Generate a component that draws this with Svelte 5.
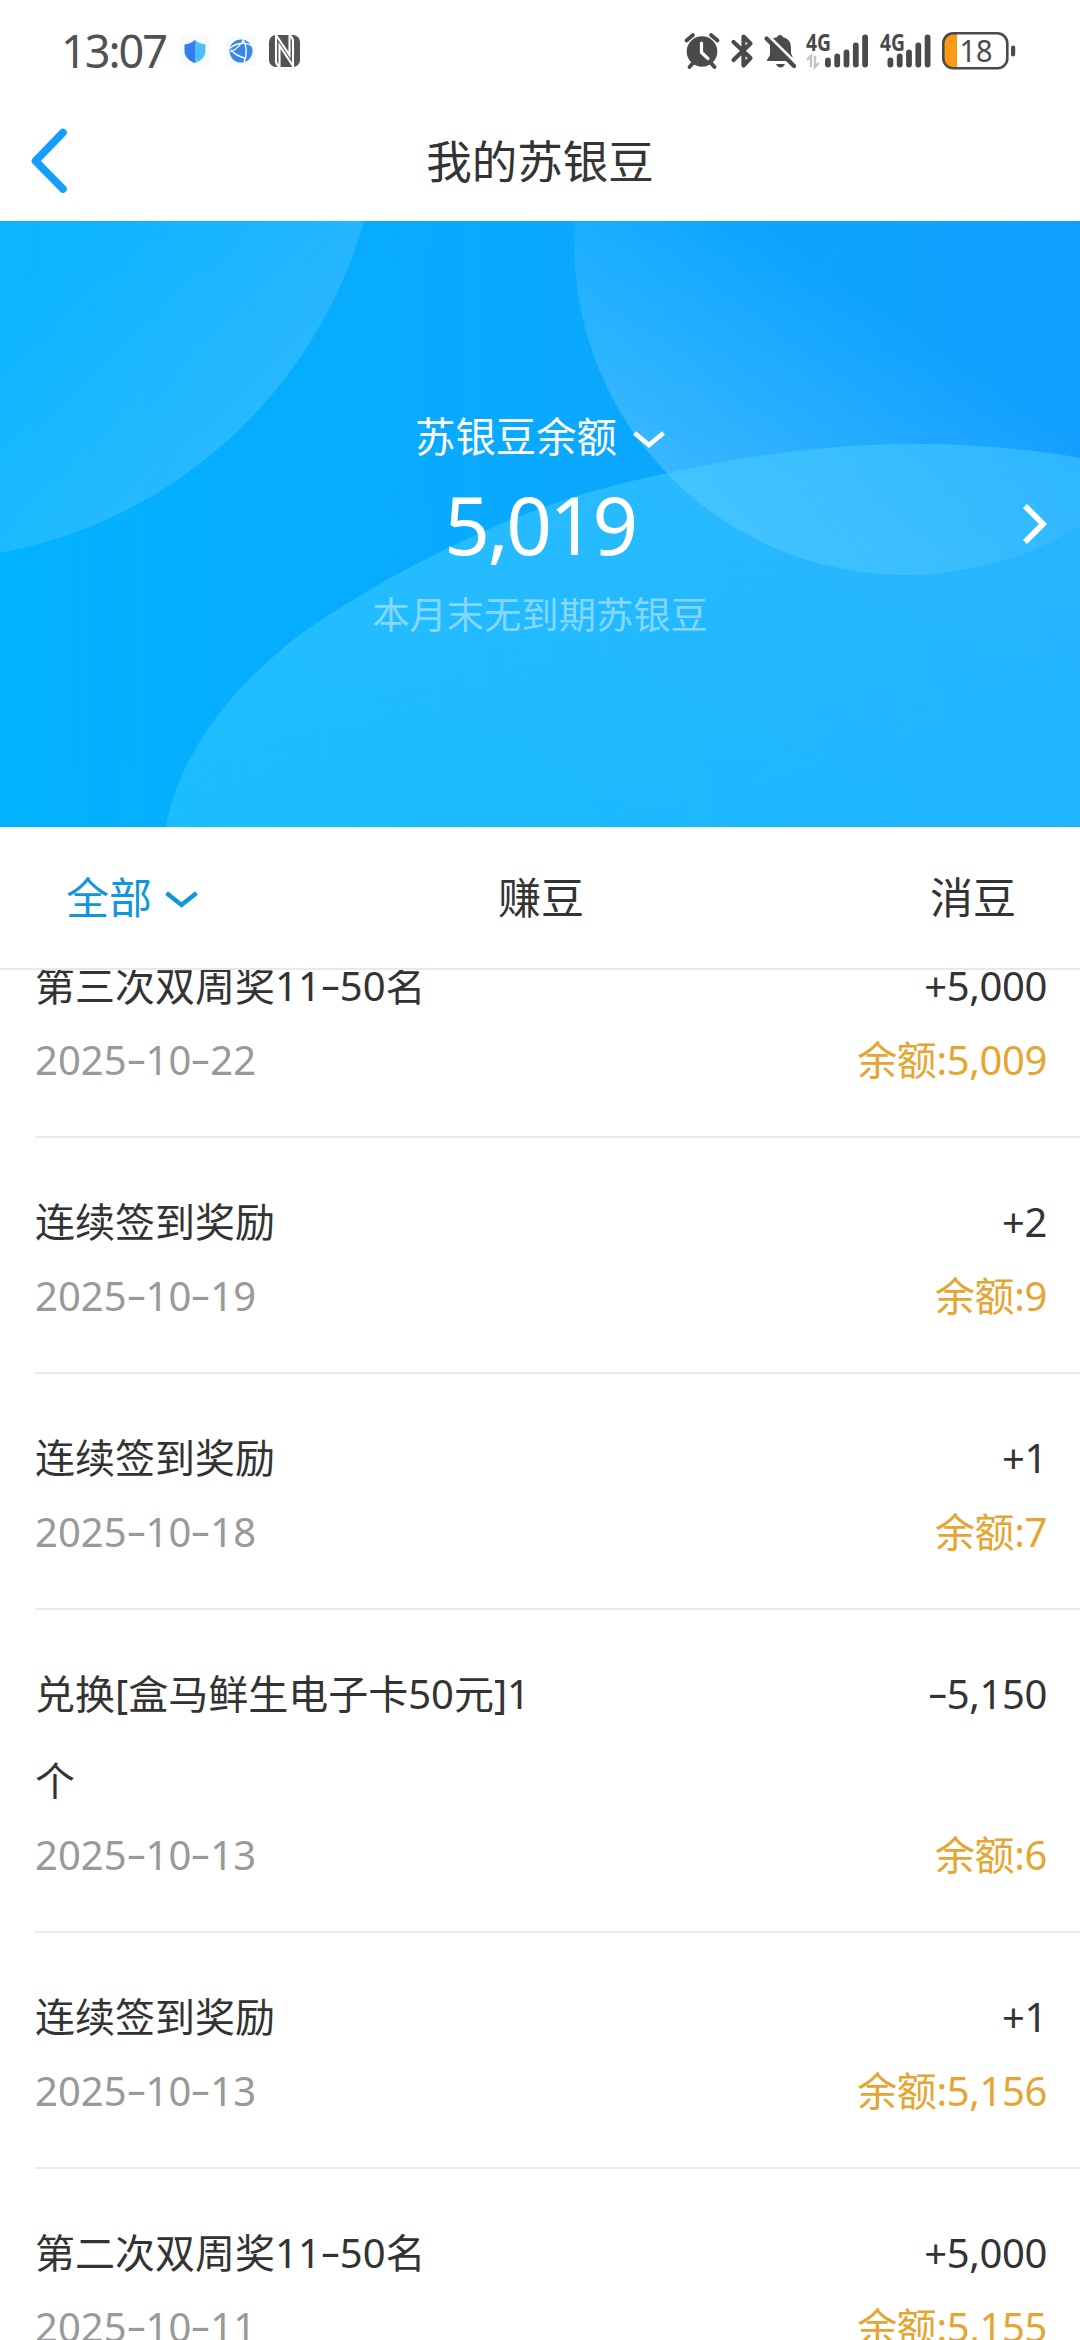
<script>
  const records = [
    { title: '第三次双周奖11-50名', date: '2025-10-22', amount: '+5,000', balance: '5,009' },
    { title: '连续签到奖励', date: '2025-10-19', amount: '+2', balance: '9' },
    { title: '连续签到奖励', date: '2025-10-18', amount: '+1', balance: '7' },
    { title: '兑换[盒马鲜生电子卡50元]1个', date: '2025-10-13', amount: '-5,150', balance: '6' },
    { title: '连续签到奖励', date: '2025-10-13', amount: '+1', balance: '5,156' },
    { title: '第二次双周奖11-50名', date: '2025-10-11', amount: '+5,000', balance: '5,155' },
  ];

  const bars = [10, 14, 18, 25, 33];
</script>

<!-- hyphens are drawn wider and higher than the font has them -->
{#snippet dashed(text)}
  {#each text.split('-') as part, i}{#if i > 0}<span class="dash">-</span>{/if}{part}{/each}
{/snippet}

{#snippet signal(data)}
  <svg width="63" height="36" viewBox="0 0 63 36">
    <text class="net" x="0" y="18" textLength="25" lengthAdjust="spacingAndGlyphs">4G</text>
    {#if data}
      <path d="M1 27l4-4v11M9 23v11l4-4" fill="none" stroke="#c4c4c4" stroke-width="2.4" />
    {/if}
    {#each bars as h, i}
      <rect x={(data ? 19 : 7.5) + i * 9.3} y={34.5 - h} width="5.8" height={h} rx="2.9" fill="#4a4a4a" />
    {/each}
  </svg>
{/snippet}

<div class="page">
  <header class="status">
    <span class="time">13:07</span>
    <svg class="shield" width="30" height="30" viewBox="0 0 30 30">
      <rect width="30" height="30" rx="3" fill="#f8fafb" />
      <path d="M15 4C11 7 8 8 4.500 8.500V15c0 6 5 10 10.500 12z" fill="#2b78ee" />
      <path d="M15 4c4 3 7 4 10.500 4.500V15c0 6-5 10-10.500 12z" fill="#45bdfb" />
    </svg>
    <svg class="globe" width="30" height="30" viewBox="0 0 30 30">
      <rect width="30" height="30" rx="3" fill="#f8fafb" />
      <circle cx="15" cy="15" r="11.500" fill="#2f83ea" />
      <path d="M4 12.500Q8 8 15 7.500T26 10M17 3.500Q23 14 18 26.500M5 14Q10 20 20 22.500M4.500 16Q13 12 17.500 4" fill="none" stroke="#fff" stroke-width="1.300" />
    </svg>
    <svg class="nfc" width="31" height="32" viewBox="0 0 31 32">
      <rect width="31" height="32" rx="7" fill="#4a4a4a" />
      <path d="M7 0v26q0 3.500 3.500 5.500V10.500L24 31V6q0-3.500-3.500-5.500V20z" fill="none" stroke="#fff" stroke-width="2.100" />
    </svg>

    <div class="indicators">
      <svg class="alarm" width="34" height="36" viewBox="0 0 34 36">
        <circle cx="17" cy="18.500" r="15.300" fill="#4a4a4a" />
        <path d="M1.500 7.500L8 2M32.500 7.500L26 2M8 30l-3.500 4M26 30l3.500 4" stroke="#4a4a4a" stroke-width="3.800" stroke-linecap="round" />
        <path d="M16.500 10v9.500l6.500 6" fill="none" stroke="#fff" stroke-width="3.200" stroke-linecap="round" />
      </svg>
      <svg class="bt" width="23" height="36" viewBox="0 0 23 36">
        <path d="M2.500 9l17 16-7 7.500V3.500l7 7L2.500 27" fill="none" stroke="#4a4a4a" stroke-width="4.200" stroke-linejoin="round" stroke-linecap="round" />
      </svg>
      <svg class="bell" width="32" height="36" viewBox="0 0 32 36">
        <path d="M6 14Q6 5 13 4.300Q13.500 2 16 2t3 2.300Q27 6 27 15v5l3 8H2.500l3.500-6z" fill="#4a4a4a" />
        <path d="M12 31h9q-1.500 3.500-4.500 3.500T12 31z" fill="#4a4a4a" />
        <path d="M4.500 3L32 30" stroke="#fff" stroke-width="3" />
        <path d="M2.500 5.500L30 33" stroke="#4a4a4a" stroke-width="4.200" stroke-linecap="round" />
      </svg>
      {@render signal(true)}
      <span class="second">{@render signal(false)}</span>
      <svg class="battery" width="74" height="38" viewBox="0 0 74 38">
        <path d="M15 2H11Q2 2 2 11v16q0 9 9 9h4z" fill="#fb9a14" />
        <rect x="1.300" y="1.300" width="64" height="35" rx="10" fill="none" stroke="#4a4a4a" stroke-width="2.600" />
        <rect x="69" y="13.500" width="4.200" height="11" rx="2.100" fill="#4a4a4a" />
        <text class="level" x="17.5" y="30" textLength="33" lengthAdjust="spacingAndGlyphs">18</text>
      </svg>
    </div>
  </header>

  <nav class="navbar">
    <svg class="back" width="38" height="66" viewBox="0 0 38 66">
      <path d="M33 4.500L5.500 33l27.500 28" fill="none" stroke="#0c9aff" stroke-width="7.600" stroke-linecap="round" stroke-linejoin="round" />
    </svg>
    <h1>我的苏银豆</h1>
  </nav>

  <section class="hero">
    <svg class="art" width="1080" height="606" viewBox="0 221 1080 606">
      <defs>
        <linearGradient id="base" x1="0" y1="0" x2="1" y2="0">
          <stop offset="0" stop-color="#02b2ff" />
          <stop offset="1" stop-color="#119fff" />
        </linearGradient>
        <linearGradient id="left" gradientUnits="userSpaceOnUse" x1="60" y1="240" x2="260" y2="420">
          <stop offset="0" stop-color="#fff" stop-opacity="0.04" />
          <stop offset="1" stop-color="#fff" stop-opacity="0.14" />
        </linearGradient>
        <linearGradient id="right" gradientUnits="userSpaceOnUse" x1="670" y1="480" x2="810" y2="260">
          <stop offset="0" stop-color="#fff" stop-opacity="0.19" />
          <stop offset="1" stop-color="#fff" stop-opacity="0" />
        </linearGradient>
        <linearGradient id="bottom" gradientUnits="userSpaceOnUse" x1="560" y1="450" x2="600" y2="827">
          <stop offset="0" stop-color="#55d5ff" stop-opacity="0.42" />
          <stop offset="1" stop-color="#36d2ff" stop-opacity="0.4" />
        </linearGradient>
      </defs>
      <rect y="221" width="1080" height="606" fill="url(#base)" />
      <circle cx="-86" cy="93" r="468" fill="url(#left)" />
      <circle cx="906" cy="243" r="332" fill="url(#right)" />
      <path
        d="M166 827C176 765 222 700 273 657C312 622 350 602 390 578C430 556 468 538 510 520C565 498 610 485 668 473C750 455 830 444 915 444C975 444 1030 449 1080 458V827z"
        fill="url(#bottom)"
      />
    </svg>
    <div class="summary">
      <div class="label">
        苏银豆余额
        <svg width="32" height="18" viewBox="0 0 32 18">
          <path d="M1.500 2L16 14 30.500 2" fill="none" stroke="#fff" stroke-width="4.600" />
        </svg>
      </div>
      <div class="total">5,019</div>
      <div class="expiry">本月末无到期苏银豆</div>
    </div>
    <svg class="more" width="26" height="42" viewBox="0 0 26 42">
      <path d="M3 3l18 18L3 39" fill="none" stroke="#fff" stroke-width="5.800" />
    </svg>
  </section>

  <div class="tabs">
    <span class="tab active">
      全部
      <svg width="33" height="18" viewBox="0 0 33 18">
        <path d="M1.500 2L16.500 14 31.500 2" fill="none" stroke="#1296db" stroke-width="4.400" />
      </svg>
    </span>
    <span class="tab">赚豆</span>
    <span class="tab last">消豆</span>
  </div>

  <ul class="records">
    {#each records as record}
      <li>
        <div class="line">
          <span class="title">{@render dashed(record.title)}</span>
          <span class="amount">{@render dashed(record.amount)}</span>
        </div>
        <div class="line meta">
          <span class="date">{@render dashed(record.date)}</span>
          <span class="balance">余额:{record.balance}</span>
        </div>
      </li>
    {/each}
  </ul>
</div>

<style>
  :global(body) {
    background: #fff;
  }

  .page {
    display: flex;
    flex-direction: column;
    width: 1080px;
    height: 2340px;
    overflow: hidden;
    background: #fff;
    color: #333;
    font-family: 'Noto Sans', 'Noto Sans CJK SC', sans-serif;
    font-size: 40px;
  }

  svg {
    display: block;
    flex: none;
    overflow: visible;
  }

  .status {
    display: flex;
    align-items: center;
    flex: none;
    height: 101px;
    box-sizing: border-box;
    padding: 0 64px 0 61px;
  }

  .time {
    width: 119px;
    color: #4a4a4a;
    font-size: 45px;
    letter-spacing: -2px;
  }

  .globe {
    margin-left: 16px;
  }

  .nfc {
    margin-left: 13px;
  }

  .indicators {
    display: flex;
    align-items: center;
    margin-left: auto;
  }

  .bt {
    margin-left: 12px;
  }

  .bell {
    margin: 0 10px;
  }

  .second {
    margin-left: 11px;
    width: 62px;
  }

  .net {
    font-family: 'Open Sans', sans-serif;
    font-size: 23px;
    font-weight: 700;
    fill: #4a4a4a;
  }

  .level {
    font-size: 31px;
    fill: #4a4a4a;
  }

  .navbar {
    display: grid;
    grid-template-columns: 1fr auto 1fr;
    align-items: center;
    flex: none;
    height: 120px;
  }

  .back {
    margin-left: 30px;
  }

  h1 {
    margin: 0;
    font-size: 45.5px;
    font-weight: 400;
    line-height: 60px;
  }

  .hero {
    position: relative;
    flex: none;
    height: 606px;
    color: #fff;
  }

  .art {
    position: absolute;
    inset: 0;
  }

  .summary {
    position: relative;
    display: flex;
    flex-direction: column;
    align-items: center;
    padding-top: 186px;
  }

  .label {
    display: flex;
    align-items: center;
    gap: 16px;
    font-size: 40.4px;
    line-height: 60px;
  }

  .label svg {
    margin-top: 6px;
  }

  .total {
    margin-top: 4px;
    font-size: 80px;
    line-height: 106px;
    letter-spacing: -2.6px;
  }

  .expiry {
    margin-top: 11px;
    color: rgba(255, 255, 255, 0.45);
    font-size: 37.3px;
    line-height: 54px;
  }

  .more {
    position: absolute;
    right: 32px;
    top: 282px;
  }

  .tabs {
    display: grid;
    grid-template-columns: 1fr auto 1fr;
    align-items: center;
    flex: none;
    height: 143px;
    box-sizing: border-box;
    padding: 0 64px 4px 66px;
    border-bottom: 2px solid #e8e8e8;
    font-size: 43px;
  }

  .tab {
    display: flex;
    align-items: center;
    gap: 13px;
  }

  .tab svg {
    margin-top: 9px;
  }

  .active {
    color: #1296db;
  }

  .last {
    justify-content: flex-end;
  }

  /* the list is scrolled, so its first row slips under the tabs */
  .records {
    flex: 1;
    min-height: 0;
    margin: 0;
    padding: 0 0 0 35px;
    overflow: hidden;
    list-style: none;
  }

  li {
    padding: 40px 33px 46px 0;
    border-bottom: 2px solid #ebebeb;
  }

  li:first-child {
    margin-top: -68px;
  }

  .line {
    display: flex;
    justify-content: space-between;
    line-height: 87px;
  }

  .title {
    width: 510px;
    word-break: break-all;
  }

  .amount,
  .balance {
    letter-spacing: -0.4px;
  }

  .meta {
    line-height: 61px;
  }

  .date {
    color: #999;
  }

  .balance {
    color: #e6a532;
  }

  .dash {
    display: inline-block;
    width: 19px;
    text-align: center;
    transform: translateY(-2px) scaleX(1.6);
  }
</style>
